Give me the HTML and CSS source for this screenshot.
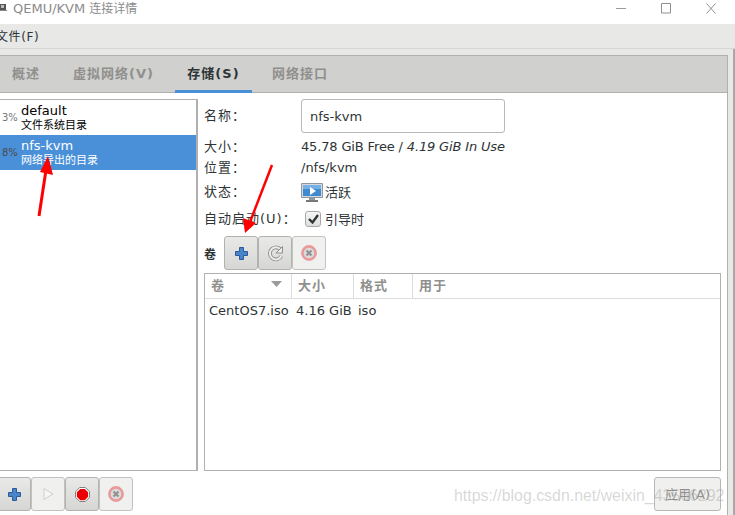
FILE: index.html
```html
<!DOCTYPE html>
<html lang="zh">
<head>
<meta charset="utf-8">
<title>QEMU/KVM 连接详情</title>
<link rel="stylesheet" href="styles.css">
</head>
<body>
<div class="app">
  <header class="titlebar">
    <svg class="app-icon" width="7" height="9" viewBox="0 0 7 9"><path d="M0 1h6v6H0z" fill="#555"/><path d="M1 2h3v3H1z" fill="#bbb"/><path d="M0 7h7v1H0z" fill="#888"/></svg>
    <span class="title">QEMU/KVM <span class="title-cjk">连接详情</span></span>
    <div class="win-controls">
      <svg width="10" height="11" viewBox="0 0 10 11"><path d="M0 5.500h10" stroke="#9a9a9a" fill="none"/></svg>
      <svg width="10" height="11" viewBox="0 0 10 11"><path d="M.5.500h9v9.500h-9z" stroke="#8f8f8f" fill="none"/></svg>
      <svg width="10" height="11" viewBox="0 0 10 11"><path d="M.5.500l9 10M9.500.500l-9 10" stroke="#8f8f8f" fill="none"/></svg>
    </div>
  </header>
  <nav class="menubar"><span>文件(F)</span></nav>
  <div class="shell">
    <div class="notebook">
      <div class="tabs">
        <span class="tab tab-overview">概述</span>
        <span class="tab tab-net">虚拟网络(V)</span>
        <span class="tab tab-active">存储(S)</span>
        <span class="tab tab-iface">网络接口</span>
      </div>
      <div class="page">
        <aside class="side">
          <ul class="pools">
            <li class="pool">
              <span class="pct">3%</span>
              <div class="pool-text"><div class="pool-name">default</div><div class="pool-sub">文件系统目录</div></div>
            </li>
            <li class="pool selected">
              <span class="pct">8%</span>
              <div class="pool-text"><div class="pool-name">nfs-kvm</div><div class="pool-sub">网络导出的目录</div></div>
            </li>
          </ul>
          <div class="toolbar side-toolbar">
            <button class="btn"><svg width="13" height="13" viewBox="0 0 13 13"><path d="M4.500.5h4v4h4v4h-4v4h-4v-4h-4v-4h4z" fill="#4a84c8" stroke="#2a5a9c"/></svg></button>
            <button class="btn off"><svg width="14" height="14" viewBox="0 0 14 14"><path d="M3 1.500l9 5.500-9 5.500z" fill="#f6f6f6" stroke="#cfcfcf"/></svg></button>
            <button class="btn"><svg width="15" height="15" viewBox="0 0 16 16"><path d="M5 .5h6L15.500 5v6L11 15.500H5L.5 11V5z" fill="#fff" stroke="#777"/><path d="M5.600 2h4.800L14 5.600v4.800L10.400 14H5.600L2 10.400V5.600z" fill="#ea0000"/></svg></button>
            <button class="btn off"><svg width="16" height="16" viewBox="0 0 16 16"><circle cx="8" cy="8" r="6.600" fill="#dcdcdc" stroke="#e89a9a" stroke-width="2.600"/><path d="M5.500 5.500l5 5M10.500 5.500l-5 5" stroke="#929292" stroke-width="2.200"/></svg></button>
          </div>
        </aside>
        <section class="detail">
          <div class="field field-name">
            <span class="label">名称：</span>
            <input class="name-input" value="nfs-kvm">
          </div>
          <div class="field field-size">
            <span class="label">大小：</span>
            <span class="value value-size">45.78 GiB Free / <i>4.19 GiB In Use</i></span>
          </div>
          <div class="field field-loc">
            <span class="label">位置：</span>
            <span class="value">/nfs/kvm</span>
          </div>
          <div class="field field-state">
            <span class="label">状态：</span>
            <span class="value state">
              <svg class="state-icon" width="22" height="20" viewBox="0 0 22 20"><path d="M.5.5h21v14H.5z" fill="#d5d9de" stroke="#8f979f"/><path d="M2 2h18v11H2z" fill="#3f8ad0"/><path d="M2 2h18v4H2z" fill="#74b0e6"/><path d="M9 4l6 4-6 4z" fill="#fff"/><path d="M8 15h6v2H8z" fill="#8f979f"/><path d="M5 17h12v2H5z" fill="#777"/></svg>
              <span class="lift">活跃</span>
            </span>
          </div>
          <div class="field field-auto">
            <span class="label">自动启动(U)：</span>
            <span class="value auto">
              <span class="check"><svg width="13" height="12" viewBox="0 0 13 12"><path d="M2 6l3.500 3.500L11 2" fill="none" stroke="#2e3436" stroke-width="2.400"/></svg></span>
              <span class="lift">引导时</span>
            </span>
          </div>
          <div class="vol-bar">
            <b class="vol-label">卷</b>
            <div class="toolbar">
              <button class="btn"><svg width="13" height="13" viewBox="0 0 13 13"><path d="M4.500.5h4v4h4v4h-4v4h-4v-4h-4v-4h4z" fill="#4a84c8" stroke="#2a5a9c"/></svg></button>
              <button class="btn"><svg width="17" height="17" viewBox="0 0 17 17"><path d="M13.500 4.500A6 6 0 1 0 14.300 11" fill="none" stroke="#8e8e8e" stroke-width="3.800"/><path d="M13.500 4.500A6 6 0 1 0 14.300 11" fill="none" stroke="#ececec" stroke-width="2"/><path d="M15.500 1.500v6.500h-6.500z" fill="#ececec" stroke="#8e8e8e"/></svg></button>
              <button class="btn off"><svg width="16" height="16" viewBox="0 0 16 16"><circle cx="8" cy="8" r="6.600" fill="#dcdcdc" stroke="#e89a9a" stroke-width="2.600"/><path d="M5.500 5.500l5 5M10.500 5.500l-5 5" stroke="#929292" stroke-width="2.200"/></svg></button>
            </div>
          </div>
          <div class="table">
            <div class="thead">
              <span class="th th-vol">卷<svg width="11" height="6" viewBox="0 0 11 6"><path d="M0 0h11L5.500 6z" fill="#9b9b9b"/></svg></span>
              <span class="th th-size">大小</span>
              <span class="th th-fmt">格式</span>
              <span class="th th-use">用于</span>
            </div>
            <div class="row">
              <span class="td-vol">CentOS7.iso</span>
              <span class="td-size">4.16 GiB</span>
              <span class="td-fmt">iso</span>
            </div>
          </div>
          <div class="actions"><button class="btn-apply">应用(A)</button></div>
        </section>
      </div>
    </div>
  </div>
  <svg class="arrows" width="735" height="515" viewBox="0 0 735 515">
    <path d="M39 216L46 170" stroke="#f00" stroke-width="3" fill="none"/>
    <path d="M40 172L48 156L53 175z" fill="#f00"/>
    <path d="M272 165L250 222" stroke="#f00" stroke-width="2.500" fill="none"/>
    <path d="M243 218L245 233L256 223z" fill="#f00"/>
  </svg>
  <div class="watermark">https://blog.csdn.net/weixin_43566292</div>
</div>
</body>
</html>
```
FILE: styles.css
```css
* { box-sizing: border-box; }
html, body { margin: 0; padding: 0; }
body {
  width: 735px;
  height: 515px;
  overflow: hidden;
  background: #fff;
  font-family: "DejaVu Sans", "Noto Sans CJK SC", sans-serif;
  font-size: 13px;
  color: #2e3436;
}
.app { position: relative; width: 735px; height: 515px; display: flex; flex-direction: column; }

.titlebar { height: 24px; display: flex; align-items: flex-start; background: #fff; flex: none; }
.app-icon { margin: 3px 6px 0 0; }
.title { color: #8b8b8b; font-size: 13px; line-height: 17px; }
.title-cjk { font-size: 12px; }
.win-controls { margin-left: auto; display: flex; gap: 35px; margin: 3px 19px 0 auto; }

.menubar { height: 25px; flex: none; background: #e8e8e7; border-bottom: 1px solid #d6d6d4; line-height: 25px; font-size: 12px; padding-top: 1px; }
.menubar span { margin-left: -4px; letter-spacing: .6px; display: inline-block; }

.shell { flex: 1; min-height: 0; background: #e8e8e7; padding: 6px 5px 0 0; border-right: 2px solid #a8a8a8; display: flex; }
.notebook { flex: 1; display: flex; flex-direction: column; border-right: 1px solid #b0b0ae; }
.tabs { height: 38px; flex: none; display: flex; background: #d0d0ce; border-top: 1px solid #b0b0ae; border-bottom: 1px solid #b0b0ae; font-weight: 700; font-size: 13px; letter-spacing: 1px; color: #8f8f8d; }
.tab { display: flex; align-items: center; height: 37px; margin-bottom: -1px; padding-bottom: 4px; white-space: nowrap; }
.tab-overview { margin-left: 12px; }
.tab-net { margin-left: 33px; }
.tab-active { margin-left: 21px; width: 77px; justify-content: center; color: #2e3436; border-bottom: 3px solid #4a90d9; padding-bottom: 1px; }
.tab-iface { margin-left: 20px; }
.page { flex: 1; min-height: 0; background: #fff; display: flex; padding: 6px 6px 0 0; }

.side { width: 198px; flex: none; display: flex; flex-direction: column; }
.pools { list-style: none; margin: 0; padding: 0; height: 372px; flex: none; border: 1px solid #b0b0ae; border-left: 0; border-right-width: 2px; background: #fff; }
.pool { height: 35px; display: flex; padding-left: 2px; color: #000; }
.pct { width: 19px; flex: none; font-size: 10px; color: #777; padding-top: 12px; line-height: 12px; }
.pool-text { min-width: 0; }
.pool-name { font-size: 13px; line-height: 15px; padding-top: 3px; }
.pool-sub { font-size: 11px; line-height: 13px; margin-top: 1px; }
.selected { background: #4a90d9; color: #fff; }
.selected .pct { color: #4a4a4a; }
.toolbar { display: flex; }
.side-toolbar { margin-top: 6px; margin-left: -3px; }
.btn { width: 34px; height: 34px; padding: 0; margin: 0; display: flex; align-items: center; justify-content: center; background: linear-gradient(#e9e9e8, #d6d6d4); border: 1px solid #b2b2b0; border-radius: 3px; }
.btn.off { background: #f0f0ef; border-color: #c2c2c0; }

.detail { flex: 1; min-width: 0; margin-left: 6px; display: flex; flex-direction: column; }
.field { display: flex; align-items: center; flex: none; }
.label { width: 97px; flex: none; font-size: 13px; letter-spacing: 1px; white-space: nowrap; color: #2e3436; padding-bottom: 3px; }
.field-size .label, .field-loc .label { padding-bottom: 1px; }
.value { color: #2e3436; font-size: 13px; white-space: nowrap; }
.value-size { letter-spacing: -.15px; }
.lift { padding-bottom: 2px; }
.field-name { height: 34px; }
.name-input { width: 204px; height: 34px; border: 1px solid #b8b8b6; border-radius: 3px; padding: 0 8px; font: 13px "DejaVu Sans", sans-serif; color: #2e3436; background: #fff; }
.field-size { height: 20px; margin-top: 3px; }
.field-loc { height: 20px; margin-top: 1px; }
.field-state { height: 24px; margin-top: 3px; }
.state, .auto { display: flex; align-items: center; gap: 2px; font-size: 13px; }
.state-icon { margin-top: 2px; }
.field-auto { height: 24px; margin-top: 3px; }
.auto { margin-left: 4px; gap: 4px; }
.check { width: 16px; height: 16px; border: 1px solid #a8a8a6; border-radius: 3px; background: linear-gradient(#f6f6f6, #dedede); display: flex; align-items: center; justify-content: center; }
.vol-bar { display: flex; align-items: center; margin-top: 5px; height: 34px; flex: none; }
.vol-label { width: 20px; font-size: 12px; }
.table { height: 198px; margin-top: 3px; flex: none; border: 1px solid #b0b0ae; }
.thead { height: 25px; display: flex; border-bottom: 1px solid #dcdcda; font-weight: 700; font-size: 13px; letter-spacing: 1px; color: #8f8f8d; }
.th { display: flex; align-items: center; padding: 0 0 4px 6px; border-right: 1px solid #dcdcda; }
.th-vol { width: 87px; justify-content: space-between; padding-right: 9px; }
.th-size { width: 62px; }
.th-fmt { width: 59px; }
.th-use { border-right: 0; }
.row { height: 22px; display: flex; align-items: center; color: #2e3436; white-space: nowrap; }
.td-vol { margin-left: 4px; width: 87px; }
.td-size { width: 62px; }
.actions { display: flex; justify-content: flex-end; margin-top: 6px; }
.btn-apply { width: 67px; height: 34px; padding: 0 0 2px; background: #f0f0ef; border: 1px solid #b8b8b6; border-radius: 3px; color: #8f8f8d; font: 13px "DejaVu Sans", "Noto Sans CJK SC", sans-serif; }

.arrows { position: absolute; left: 0; top: 0; pointer-events: none; }
.watermark { position: absolute; left: 454px; top: 487px; font: 15.900px "Liberation Sans", sans-serif; color: rgba(150, 150, 150, .38); white-space: nowrap; }
```
